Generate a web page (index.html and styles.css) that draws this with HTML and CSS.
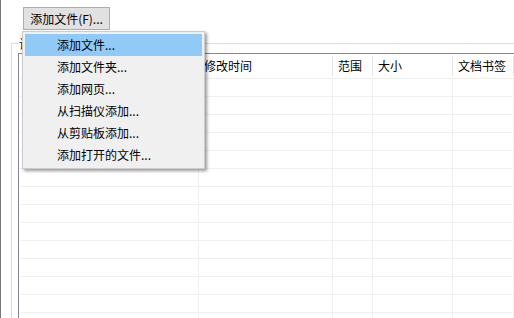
FILE: index.html
```html
<!DOCTYPE html>
<html lang="zh-CN">
<head>
    <meta charset="UTF-8">
    <title>添加文件</title>
    <link rel="stylesheet" href="styles.css">
</head>
<body>
<div class="window">
    <div class="toolbar">
        <button class="btn">添加文件(F)...</button>
    </div>

    <div class="group">
        <span class="group-label">设置</span>
        <div class="list">
            <div class="list-head">
                <div class="hcell c1">名称</div>
                <div class="hcell c2">修改时间</div>
                <div class="hcell c3">范围</div>
                <div class="hcell c4">大小</div>
                <div class="hcell c5">文档书签</div>
            </div>
            <div id="rows"></div>
        </div>
    </div>

    <!-- 下拉菜单 -->
    <ul class="menu">
        <li class="active">添加文件...</li>
        <li>添加文件夹...</li>
        <li>添加网页...</li>
        <li>从扫描仪添加...</li>
        <li>从剪贴板添加...</li>
        <li>添加打开的文件...</li>
    </ul>
</div>

<script>
    // 空行，只画网格线
    const rows = document.getElementById('rows');
    for (let i = 0; i < 14; i++) {
        const row = document.createElement('div');
        row.className = 'row';
        ['c1', 'c2', 'c3', 'c4', 'c5'].forEach(c => {
            const cell = document.createElement('div');
            cell.className = 'cell ' + c;
            row.appendChild(cell);
        });
        rows.appendChild(row);
    }
</script>
</body>
</html>
```

FILE: styles.css
```css
html, body {
    margin: 0;
    height: 100%;
    overflow: hidden;
    background: #fff;
}
body {
    font-family: "Noto Sans CJK SC", "Noto Sans", sans-serif;
    font-size: 12px;
    color: #000;
}
.window {
    position: relative;
    box-sizing: border-box;
    height: 318px;
    border-left: 1px solid #767676;
    overflow: hidden;
}
.toolbar {
    padding: 7px 0 0 22px;
    height: 23px;
}
.btn {
    display: block;
    box-sizing: border-box;
    width: 87px;
    height: 23px;
    padding: 0;
    margin: 0;
    font: inherit;
    line-height: 21px;
    background: #e1e1e1;
    border: 1px solid #adadad;
    color: #000;
}
.group {
    position: relative;
    box-sizing: border-box;
    margin: 13px 0 0 10px;
    height: 275px;
    border-left: 1px solid #dcdcdc;
    border-top: 1px solid #dcdcdc;
    padding: 9px 0 0 6px;
}
.group-label {
    position: absolute;
    left: 6px;
    top: -8px;
    background: #fff;
    padding: 0 1px;
    line-height: 16px;
}
.list {
    box-sizing: border-box;
    height: 265px;
    border-left: 1px solid #828790;
    border-top: 1px solid #828790;
    padding-left: 1px;
    overflow: hidden;
}
.list-head {
    display: flex;
    height: 24px;
}
.hcell {
    box-sizing: border-box;
    height: 20px;
    margin: 2px 0;
    line-height: 20px;
    padding-left: 5px;
    border-right: 1px solid #e5e5e5;
    white-space: nowrap;
}
.row {
    display: flex;
    height: 17px;
    border-top: 1px solid #f0f0f0;
}
.cell {
    box-sizing: border-box;
    border-right: 1px solid #f0f0f0;
}
.c1 { width: 179px; }
.c2 { width: 134px; }
.c3 { width: 40px; }
.c4 { width: 80px; }
.c5 { flex: 1; }

.menu {
    position: absolute;
    left: 21px;
    top: 31px;
    width: 177px;
    margin: 0;
    padding: 2px;
    list-style: none;
    background: #f0f0f0;
    border: 1px solid #cccccc;
    box-shadow: 2px 2px 3px rgba(0, 0, 0, 0.4);
}
.menu li {
    height: 22px;
    line-height: 22px;
    padding-left: 32px;
    white-space: nowrap;
}
.menu li.active {
    background: #91c9f7;
}
```
